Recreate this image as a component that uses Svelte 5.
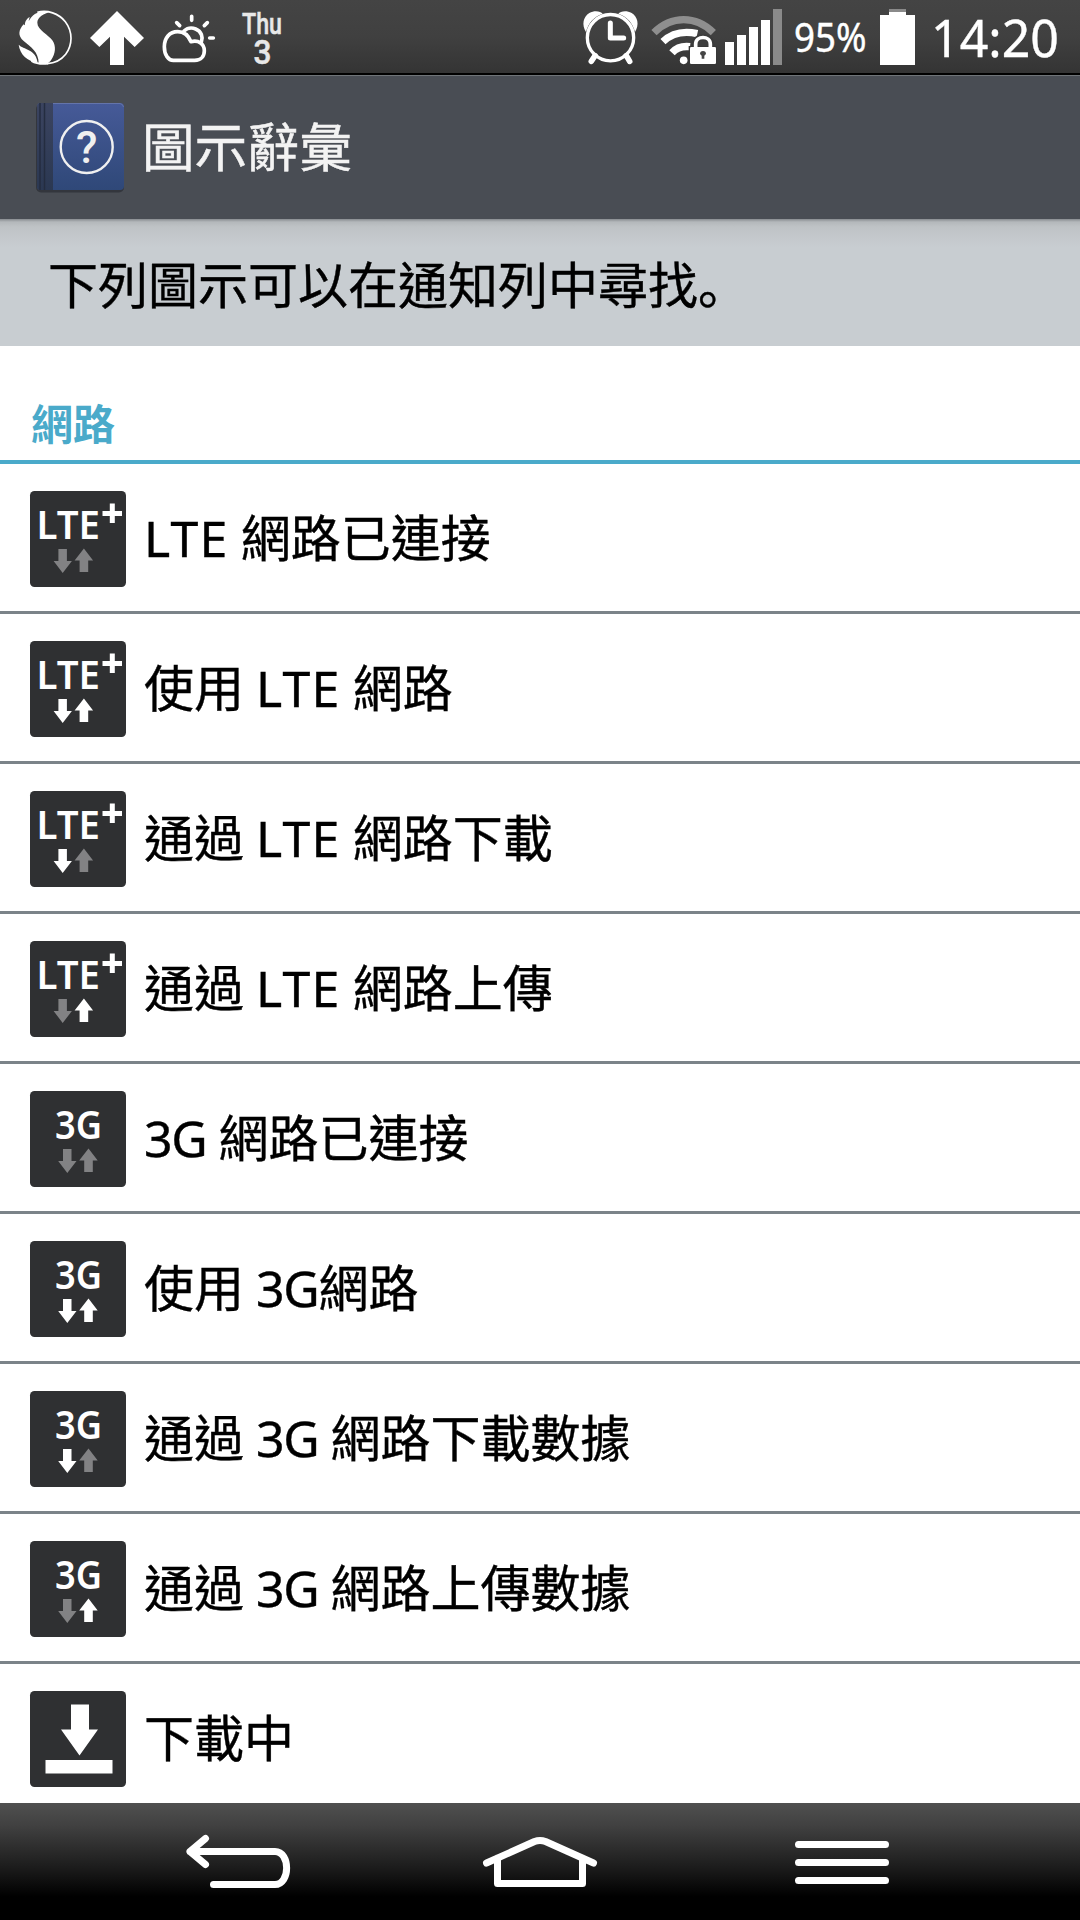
<script>
  const rows = [
    { type: 'lte', down: false, up: false, label: 'LTE 網路已連接' },
    { type: 'lte', down: true, up: true, label: '使用 LTE 網路' },
    { type: 'lte', down: true, up: false, label: '通過 LTE 網路下載' },
    { type: 'lte', down: false, up: true, label: '通過 LTE 網路上傳' },
    { type: '3g', down: false, up: false, label: '3G 網路已連接' },
    { type: '3g', down: true, up: true, label: '使用 3G網路' },
    { type: '3g', down: true, up: false, label: '通過 3G 網路下載數據' },
    { type: '3g', down: false, up: true, label: '通過 3G 網路上傳數據' },
    { type: 'download', label: '下載中' }
  ];

  // Latin abbreviations get their own tracking inside the Chinese labels.
  const parts = (label) => label.split(/(LTE|3G)/).filter(Boolean);
</script>

<div class="screen">
  <header class="status">
    <div class="left">
      <svg width="54" height="73" viewBox="54 0 162 219">
        <path d="M112 37C142 29 176 40 196 65C219 95 218 135 197 163C182 182 162 190 142 191" fill="none" stroke="#fff" stroke-width="5" />
        <path d="M152 36C118 30 97 41 86 64L89 50C78 58 73 68 75 76L71 73C56 90 52 107 71 123C93 141 116 156 116 190C134 195 146 190 152 182C168 160 168 138 158 122C146 104 112 90 112 68C112 52 132 40 152 36Z" fill="#fff" />
        <path d="M56 134C70 149 108 146 113 188C82 184 60 164 56 134Z" fill="#fff" />
        <path d="M94 183C108 191 124 194 144 191" fill="none" stroke="#fff" stroke-width="5" />
      </svg>
      <svg width="54" height="73" viewBox="270 0 162 219">
        <path d="M351 33L432 114L404 141L372 110V195H330V110L298 141L270 114Z" fill="#fff" />
      </svg>
      <svg width="54" height="73" viewBox="486 0 162 219">
        <g fill="none" stroke="#fff" stroke-width="11" stroke-linecap="round" stroke-linejoin="round">
          <path d="M520 181H584C603 181 613 168 613 152C613 132 596 119 573 125C565 106 550 95 533 95C508 95 493 115 493 140C493 165 505 181 520 181Z" />
          <path d="M552 93C562 84 575 82 587 87C604 94 610 111 604 126" />
          <path d="M575 49V61M530 68L539 77M622 68L613 77M629 114H640" />
        </g>
      </svg>
      <svg class="date" width="44" height="73" viewBox="240 0 44 73">
        <text x="242" y="33.800" font-size="29" textLength="40" lengthAdjust="spacingAndGlyphs">Thu</text>
        <text x="253.500" y="63.500" font-size="33" textLength="18" lengthAdjust="spacingAndGlyphs">3</text>
      </svg>
    </div>
    <div class="right">
      <svg width="56" height="73" viewBox="69 0 168 219">
        <g fill="#fff">
          <path d="M78 96C64 74 70 50 88 39C104 30 122 34 128 41C102 50 85 68 78 96Z" />
          <path d="M225 96C239 74 233 50 215 39C199 30 181 34 175 41C201 50 218 68 225 96Z" />
        </g>
        <circle cx="151.500" cy="113" r="69.500" fill="none" stroke="#fff" stroke-width="10" />
        <path d="M151 69V114H191" fill="none" stroke="#fff" stroke-width="15" stroke-linecap="round" stroke-linejoin="round" />
        <path d="M105 167L94 184M199 167L209 184" stroke="#fff" stroke-width="17" stroke-linecap="round" />
      </svg>
      <svg class="wifi" width="66" height="73" viewBox="273 0 198 219">
        <g fill="none" stroke-width="22">
          <path d="M282 98C334 46 408 46 460 98" stroke="#8e8e8e" />
          <path d="M309 125Q349 87 412 101" stroke="#fff" />
          <path d="M336 158Q356 136 390 140" stroke="#fff" />
        </g>
        <circle cx="371" cy="181" r="11.500" fill="#fff" />
        <path d="M403 148V134C403 104 455 104 455 134V148" fill="#3e3e3e" stroke="#3b3b3b" stroke-width="18" />
        <rect x="386" y="138" width="84" height="56" fill="#383838" />
        <path d="M407 145V132C407 106 451 106 451 132V145" fill="none" stroke="#fff" stroke-width="11" />
        <rect x="390" y="141" width="78" height="51" rx="4" fill="#fff" />
        <path d="M420 162a9 9 0 1 1 18 0l-5 5v9h-8v-9z" fill="#444" />
      </svg>
      <svg class="signal" width="57" height="73" viewBox="495 0 171 219">
        <path d="M495 126h27v69h-27zM531 105h27v90h-27zM567 81h27v114h-27zM603 60h27v135h-27z" fill="#fff" />
        <path d="M639 27h27v168h-27z" fill="#8a8a8a" />
      </svg>
      <svg class="pct" width="76" height="73" viewBox="792 0 76 73">
        <text x="794" y="52" font-size="39.500" textLength="72.500" lengthAdjust="spacingAndGlyphs">95%</text>
      </svg>
      <svg class="battery" width="35" height="73" viewBox="960 0 105 219">
        <path d="M987 27h51v9h-51z" fill="#8a8a8a" />
        <path d="M987 36h51v9h27v150h-105v-150h27z" fill="#fff" />
      </svg>
      <svg class="clock" width="134" height="73" viewBox="928 0 134 73">
        <text x="931" y="57" font-size="50.500" textLength="128" lengthAdjust="spacingAndGlyphs">14:20</text>
      </svg>
    </div>
  </header>

  <div class="titlebar">
    <svg width="96" height="96" viewBox="0 0 96 96">
      <defs>
        <linearGradient id="cover" x1="0" y1="0" x2="0" y2="1">
          <stop offset="0" stop-color="#465a98" />
          <stop offset="1" stop-color="#2f4878" />
        </linearGradient>
        <linearGradient id="spine" x1="0" y1="0" x2="0" y2="1">
          <stop offset="0" stop-color="#3b4460" />
          <stop offset="1" stop-color="#2b3852" />
        </linearGradient>
      </defs>
      <rect x="4" y="5" width="88" height="88.500" rx="5" fill="#33363d" />
      <rect x="5" y="4" width="87" height="87" rx="4" fill="url(#cover)" />
      <path d="M9 4H21V91H9Q5 91 5 87V8Q5 4 9 4Z" fill="url(#spine)" />
      <path d="M8 4V91M12.500 4V91" stroke="#242d40" stroke-width="1.500" />
      <path d="M21 4.500H88Q91 5 91.500 8" fill="none" stroke="#6474aa" />
      <circle cx="54.700" cy="48" r="26" fill="none" stroke="#f0f0f0" stroke-width="2.400" />
      <text x="54.700" y="64" text-anchor="middle">?</text>
    </svg>
    <h1>圖示辭彙</h1>
  </div>

  <p class="intro">下列圖示可以在通知列中尋找<span class="stop">。</span></p>
  <h2>網路</h2>

  <ul>
    {#each rows as row}
      <li>
        <svg class="badge" width="96" height="96" viewBox="0 0 96 96">
          <rect width="96" height="96" rx="4.500" fill="#2f3032" />
          {#if row.type === 'download'}
            <path d="M41 13.500H59V38.500H68L49.500 64.500L31 38.500H41ZM15.500 69H82.500V82.500H15.500Z" fill="#fff" />
          {:else}
            {#if row.type === 'lte'}
              <text x="6.500" y="47.500" textLength="63.500" lengthAdjust="spacingAndGlyphs">LTE</text>
              <path d="M82.300 12.500V32M72.500 22.500H92" stroke="#fff" stroke-width="5" />
            {:else}
              <text x="25" y="47.500" textLength="47" lengthAdjust="spacingAndGlyphs">3G</text>
            {/if}
            <g transform={row.type === 'lte' ? 'translate(-4.600 0)' : ''}>
              <path d="M33 58H41.500V70H46.500L37.300 82L28.200 70H33Z" fill={row.down ? '#fff' : '#828284'} />
              <path d="M54.200 81V69.500H49.200L58.500 57.500L67.700 69.500H62.800V81Z" fill={row.up ? '#fff' : '#828284'} />
            </g>
          {/if}
        </svg>
        <span class="label">{#each parts(row.label) as part}<span class:wide={part === 'LTE'} class:tight={part === '3G'}>{part}</span>{/each}</span>
      </li>
    {/each}
  </ul>

  <nav>
    <svg width="120" height="117" viewBox="178 1803 120 117">
      <path d="M205.500 1838.500L190 1851.500L205.500 1864.500M190 1851.500H275C290.500 1851.500 290.500 1884.500 275 1884.500H213.500" />
    </svg>
    <svg width="120" height="117" viewBox="480 1803 120 117">
      <path d="M486.500 1863L534.500 1841.500Q540 1839.500 545.500 1841.500L593.500 1863M497.500 1858V1883.500H582.500V1858" />
    </svg>
    <svg width="120" height="117" viewBox="783 1803 120 117">
      <path d="M799.500 1844.500H886.500M799.500 1862.500H886.500M799.500 1880.500H886.500" />
    </svg>
  </nav>
</div>

<style>
  :global(body) { margin: 0; }
  .screen {
    width: 1080px;
    height: 1920px;
    display: flex;
    flex-direction: column;
    overflow: hidden;
    background: #fff;
    color: #000;
    font-family: 'Noto Sans', 'Noto Sans CJK TC', sans-serif;
  }
  svg { display: block; flex: none; overflow: visible; }
  .status {
    height: 73px;
    flex: none;
    display: flex;
    justify-content: space-between;
    padding: 0 18px 0 18px;
    background: linear-gradient(#444 0, #404040 50%, #343434 100%);
    border-bottom: 2px solid #000;
  }
  .left, .right { display: flex; }
  .left { gap: 18px; }
  .date { margin-left: 6px; }
  .date text { font-family: Roboto, sans-serif; font-weight: 500; fill: #e8e8e8; stroke: #e8e8e8; stroke-width: 0.5px; }
  .wifi { margin-left: 12px; }
  .signal { margin-left: 8px; }
  .pct { margin-left: 10px; }
  .battery { margin-left: 12px; }
  .clock { margin-left: 13px; }
  .pct text, .clock text { fill: #fff; stroke: #fff; stroke-width: 0.4px; }
  .titlebar {
    height: 144px;
    flex: none;
    box-sizing: border-box;
    border-top: 1px solid #6f7478;
    background: #494d54;
    display: flex;
    align-items: center;
    padding: 0 0 2px 32px;
    gap: 14px;
  }
  .titlebar text { font: 500 44px Roboto, sans-serif; fill: #f0f0f0; }
  h1 {
    margin: 0;
    font-size: 52.500px;
    line-height: 76px;
    font-weight: 400;
    color: #f3f3f3;
    -webkit-text-stroke: 0.5px #f3f3f3;
  }
  .intro {
    margin: 0;
    height: 127px;
    flex: none;
    box-sizing: border-box;
    padding: 0 48px;
    font-size: 50px;
    line-height: 132px;
    background: linear-gradient(#888c90 0, #b4b8bb 3px, #bfc3c6 8px, #c8cdd1 28px);
    -webkit-text-stroke: 0.4px #000;
  }
  .stop { font-family: 'Noto Sans CJK JP', sans-serif; line-height: 1; }
  h2 {
    margin: 0;
    height: 118px;
    flex: none;
    box-sizing: border-box;
    border-bottom: 4px solid #4aaaca;
    padding: 47px 31px 0;
    font-size: 42px;
    line-height: 62px;
    font-weight: 700;
    color: #4aaaca;
  }
  ul {
    list-style: none;
    margin: 0;
    padding: 0;
    height: 1339px;
    flex: none;
    overflow: hidden;
  }
  li {
    height: 150px;
    box-sizing: border-box;
    border-bottom: 3px solid #7b8389;
    padding: 3px 30px 0;
    display: flex;
    align-items: center;
    gap: 18px;
    font-size: 50px;
    line-height: 70px;
    white-space: nowrap;
  }
  .label { padding-bottom: 2px; word-spacing: -1px; -webkit-text-stroke: 0.4px #000; }
  .wide { letter-spacing: 1.300px; }
  .tight { letter-spacing: -1.300px; }
  .badge text { font: 600 40px 'Noto Sans', sans-serif; fill: #fff; }
  nav {
    height: 117px;
    flex: none;
    display: flex;
    gap: 182px;
    padding-left: 178px;
    background: linear-gradient(#505050 0, #404040 20%, #1c1c1c 55%, #000 80%);
  }
  nav path {
    fill: none;
    stroke: #fff;
    stroke-width: 7px;
    stroke-linecap: round;
    stroke-linejoin: round;
  }
</style>
